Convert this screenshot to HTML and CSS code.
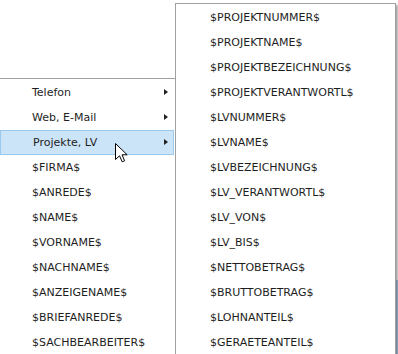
FILE: index.html
```html
<!DOCTYPE html>
<html>
<head>
<meta charset="utf-8">
<link rel="stylesheet" href="styles.css">
</head>
<body>
<div class="screen">
  <div class="backdrop-strip"></div>
  <ul class="menu main-menu">
    <li class="item has-sub">Telefon<span class="arrow"></span></li>
    <li class="item has-sub">Web, E-Mail<span class="arrow"></span></li>
    <li class="item has-sub active">Projekte, LV<span class="arrow"></span></li>
    <li class="item">$FIRMA$</li>
    <li class="item">$ANREDE$</li>
    <li class="item">$NAME$</li>
    <li class="item">$VORNAME$</li>
    <li class="item">$NACHNAME$</li>
    <li class="item">$ANZEIGENAME$</li>
    <li class="item">$BRIEFANREDE$</li>
    <li class="item">$SACHBEARBEITER$</li>
  </ul>
  <ul class="menu sub-menu">
    <li class="item">$PROJEKTNUMMER$</li>
    <li class="item">$PROJEKTNAME$</li>
    <li class="item">$PROJEKTBEZEICHNUNG$</li>
    <li class="item">$PROJEKTVERANTWORTL$</li>
    <li class="item">$LVNUMMER$</li>
    <li class="item">$LVNAME$</li>
    <li class="item">$LVBEZEICHNUNG$</li>
    <li class="item">$LV_VERANTWORTL$</li>
    <li class="item">$LV_VON$</li>
    <li class="item">$LV_BIS$</li>
    <li class="item">$NETTOBETRAG$</li>
    <li class="item">$BRUTTOBETRAG$</li>
    <li class="item">$LOHNANTEIL$</li>
    <li class="item">$GERAETEANTEIL$</li>
  </ul>
  <svg class="cursor" width="13" height="20" viewBox="0 0 13 20">
    <path d="M0.5 0.5 L0.5 16.5 L4.5 12.8 L7.2 18.8 L9.6 17.8 L7 11.8 L12.2 11.8 Z" fill="#fff" stroke="#000" stroke-width="1" stroke-linejoin="miter"/>
  </svg>
</div>
</body>
</html>
```
FILE: styles.css
```css
html, body {
  margin: 0;
  padding: 0;
  background: #fff;
}
.screen {
  position: relative;
  width: 398px;
  height: 354px;
  overflow: hidden;
  background: #fff;
  padding-top: 78px;
  box-sizing: border-box;
  font-family: "DejaVu Sans", Verdana, sans-serif;
  font-size: 11px;
  color: #1e1e1e;
}
.menu {
  list-style: none;
  margin: 0;
  background: #fff;
}
.main-menu {
  width: 175px;
  border-top: 1px solid #a0a0a0;
  border-right: 1px solid #a0a0a0;
  padding: 1px 0 0 0;
  height: 400px;
}
.item {
  position: relative;
  height: 25px;
  line-height: 25px;
  white-space: nowrap;
  box-sizing: border-box;
}
.main-menu .item {
  padding-left: 32px;
}
.main-menu .item.active {
  background: #cce4f7;
  border: 1px solid #99c9ef;
  line-height: 23px;
  padding-left: 32px;
  margin-right: 1px;
}
.arrow {
  position: absolute;
  left: 164px;
  top: 9px;
  width: 0;
  height: 0;
  border-top: 3.5px solid transparent;
  border-bottom: 3.5px solid transparent;
  border-left: 4px solid #222;
}
.active .arrow {
  left: 163px;
  top: 8px;
}
.sub-menu {
  position: absolute;
  left: 175px;
  top: 3px;
  width: 219px;
  height: 400px;
  border: 1px solid #a0a0a0;
  padding: 1px 0 0 0;
  box-shadow: 2px 2px 2px rgba(0, 0, 0, 0.35);
}
.sub-menu .item {
  padding-left: 34px;
}
.backdrop-strip {
  position: absolute;
  left: 396px;
  top: 280px;
  width: 2px;
  height: 74px;
  background: #b3c9e6;
}
.cursor {
  position: absolute;
  left: 115px;
  top: 143px;
}
```
